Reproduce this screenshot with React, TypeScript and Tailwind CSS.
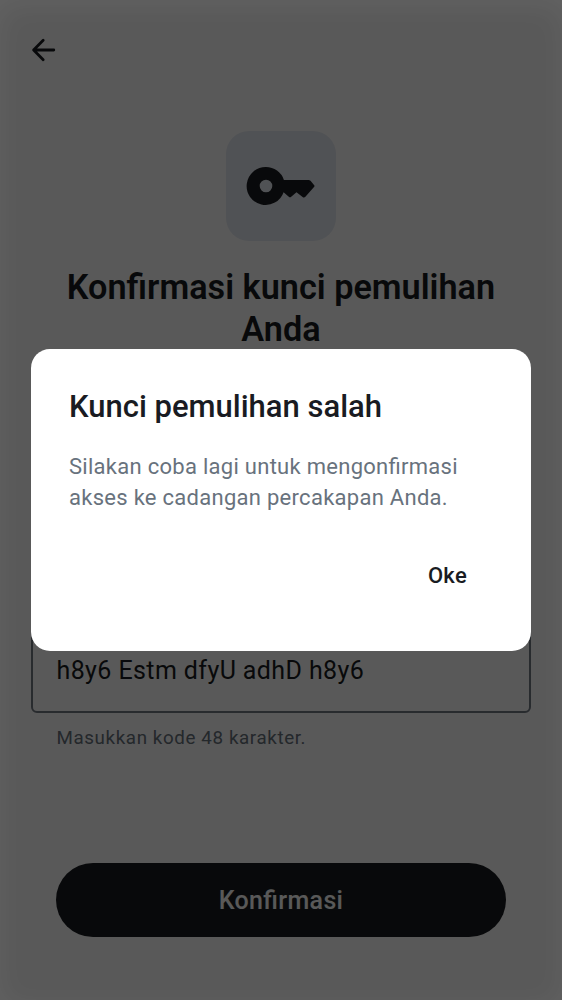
function BackIcon() {
  return (
    <svg width="26" height="26" viewBox="0 0 26 26" fill="none" stroke="currentColor" strokeWidth="2.8" strokeLinecap="round" strokeLinejoin="round">
      <path d="M22.8 13H2.7M12.2 3.3L2.6 13l9.6 9.7" />
    </svg>
  );
}

function KeyIcon() {
  return (
    <svg width="70" height="40" viewBox="-0.5 0 70 40" fill="currentColor">
      <path
        fillRule="evenodd"
        d="M19.5 1a19 19 0 1 0 17.6 25.2l5.2 4.6q1.2 1 2.4 0l5.3-4.6 6.1 4.7q1.5 1.1 2.8-.2l8.6-9.6q1-1.1 0-2.2l-3.5-4.1q-.8-.9-2-.9H37.4A19 19 0 0 0 19.5 1Zm0 12.7a6.3 6.3 0 1 1 0 12.6 6.3 6.3 0 0 1 0-12.6Z"
      />
    </svg>
  );
}

function IncorrectKeyDialog() {
  return (
    <div className="absolute inset-0 flex items-start justify-center bg-black/65 pt-[349px] shadow-[inset_0_6px_30px_rgba(255,255,255,0.06)]">
      <section role="alertdialog" aria-labelledby="dialog-title" className="flex h-[301.5px] w-[500px] flex-col rounded-[19px] bg-white px-[38px] pt-[39px] text-[#191b22]">
        <h2 id="dialog-title" className="text-[31px] leading-[38px] font-medium">Kunci pemulihan salah</h2>
        <p className="mt-[25px] text-[22px] leading-[31px] tracking-[0.28px] whitespace-nowrap text-[#68727d]">
          Silakan coba lagi untuk mengonfirmasi
          <br />
          akses ke cadangan percakapan Anda.
        </p>
        <button className="mt-[37px] mr-[13px] self-end px-[13px] py-[11px] text-[22px] leading-[30px] font-medium tracking-[0.3px]">Oke</button>
      </section>
    </div>
  );
}

export default function App() {
  return (
    <div className="relative flex h-[1000px] w-[562px] flex-col overflow-hidden bg-white font-['Roboto',sans-serif] text-[#191c20] [font-feature-settings:'liga']">
      <header className="flex h-[100px] shrink-0 items-center pl-[31px]">
        <BackIcon />
      </header>
      <main className="flex flex-1 flex-col items-center pt-[31px]">
        <div className="flex h-[109.5px] w-[110px] shrink-0 items-center justify-center rounded-[23px] bg-[#e6eaf2]">
          <KeyIcon />
        </div>
        <h1 className="mt-[25.5px] w-[450px] text-center text-[34.25px] leading-[42px] font-semibold">Konfirmasi kunci pemulihan Anda</h1>
        <div className="mt-auto w-[500px]">
          <div className="flex h-[120px] items-end rounded-[6px] border-2 border-[#747b85] px-[23.5px] pb-[24px] text-[25px] leading-[32px] tracking-[0.4px] text-[#191c20]">
            h8y6 Estm dfyU adhD h8y6
          </div>
          <p className="mt-[13px] px-[25.5px] text-[18.75px] leading-[25px] tracking-[0.62px] text-[#68727d]">Masukkan kode 48 karakter.</p>
        </div>
        <button className="mt-[111.5px] mb-[63px] h-[74.5px] w-[450px] shrink-0 rounded-full bg-[#191c20] pt-px text-[25px] font-medium tracking-[0.35px] text-white">Konfirmasi</button>
      </main>
      <IncorrectKeyDialog />
    </div>
  );
}
